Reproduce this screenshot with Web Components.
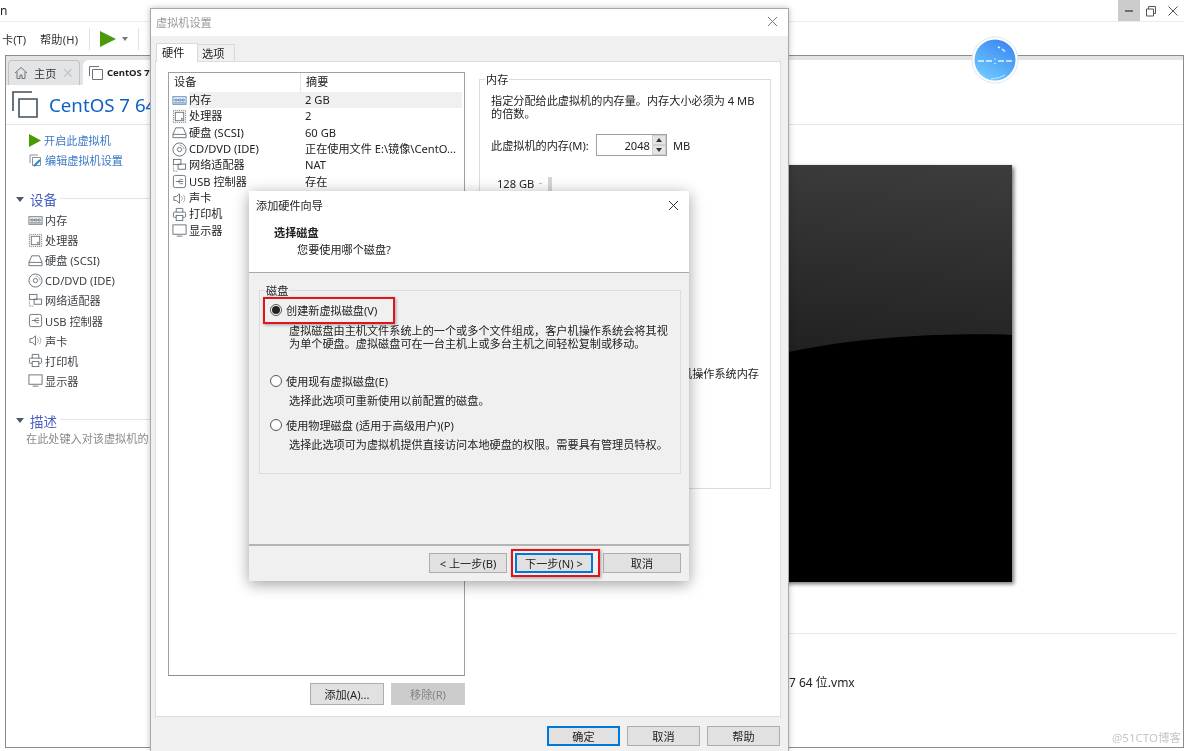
<!DOCTYPE html>
<html lang="zh">
<head>
<meta charset="utf-8">
<title>虚拟机设置</title>
<style>
  html, body { margin: 0; height: 100%; overflow: hidden; }
  body {
    position: relative;
    width: 1184px;
    height: 751px;
    background: #f0f0f0;
    color: #222;
    font: 11.15px "Noto Sans", "Noto Sans CJK SC", sans-serif;
    filter: blur(.3px);
  }
</style>
</head>
<body>
<main-window></main-window>
<settings-dialog></settings-dialog>
<wizard-dialog></wizard-dialog>

<script>
const ICONS = {
  ram: `<rect x="1" y="4" width="14" height="8"/><path d="M3 6.500h2.500v2H3zM6.800 6.500h2.500v2H6.800zM10.500 6.500H13v2h-2.500zM2 10.500h12"/>`,
  cpu: `<rect x="1.500" y="1.500" width="13" height="13" stroke-dasharray="1 1"/><rect x="3.500" y="3.500" width="9" height="9"/><path d="M10 10h1v1h-1z"/>`,
  hdd: `<path d="M4 3h8l3 7v3.500H1V10zM1 10h14"/>`,
  cd: `<circle cx="8" cy="8" r="7"/><circle cx="8" cy="8" r="2.300"/><path d="M8 3.200a4.800 4.800 0 0 1 4.800 4.800" opacity=".6"/>`,
  net: `<rect x="1.500" y="1.500" width="8" height="5.500"/><rect x="6.500" y="6.500" width="8" height="5.500"/><path d="M1.500 9v5h5" stroke-dasharray="1 1"/>`,
  usb: `<rect x="1.500" y="1.500" width="13" height="13" rx="2"/><path d="M4 8h8M6.500 8L9 5.700h2.500M6.500 8L9 10.300h2.500"/>`,
  sound: `<path d="M2 6h2.500L8 3v10l-3.500-3H2z"/><path d="M10 5.500a3.500 3.500 0 0 1 0 5M12 4a6 6 0 0 1 0 8" opacity=".6"/>`,
  printer: `<path d="M4.500 5.500v-4h7v4"/><rect x="1.500" y="5.500" width="13" height="5.500" rx="1"/><rect x="4.500" y="9" width="7" height="5.500" fill="#fff"/>`,
  display: `<rect x="1" y="2" width="14" height="10"/><path d="M5 14h6"/>`
};

class VmIcon extends HTMLElement {
  connectedCallback() {
    const name = this.getAttribute("name");
    this.attachShadow({ mode: "open" }).innerHTML = `
      <style>
        :host { display: inline-flex; width: 16px; height: 16px; flex: none; color: #69727a; }
        svg { width: 100%; height: 100%; fill: none; stroke: currentColor; stroke-width: 1; }
      </style>
      <svg viewBox="0 0 16 16">${ICONS[name] || ""}</svg>`;
  }
}
customElements.define("vm-icon", VmIcon);

class UiButton extends HTMLElement {
  connectedCallback() {
    this.attachShadow({ mode: "open" }).innerHTML = `
      <style>
        :host {
          display: flex;
          align-items: center;
          justify-content: center;
          box-sizing: border-box;
          width: 74px;
          height: 20px;
          background: #e1e1e1;
          border: 1px solid #adadad;
          color: #222;
        }
        :host([primary]) { border: 2px solid #0078d7; }
        :host([off]) { background: #cccccc; border-color: #cccccc; color: #838383; }
      </style>
      <slot></slot>`;
  }
}
customElements.define("ui-button", UiButton);

class GroupBox extends HTMLElement {
  connectedCallback() {
    const label = this.getAttribute("label");
    this.attachShadow({ mode: "open" }).innerHTML = `
      <style>
        :host {
          display: block;
          position: relative;
          box-sizing: border-box;
          border: 1px solid var(--line, #dcdcdc);
        }
        .legend {
          position: absolute;
          left: 5px;
          top: -8px;
          padding: 0 1px;
          line-height: 15px;
          background: var(--fill, #fff);
        }
      </style>
      <div class="legend">${label}</div>
      <slot></slot>`;
  }
}
customElements.define("group-box", GroupBox);

class SectionHead extends HTMLElement {
  connectedCallback() {
    this.attachShadow({ mode: "open" }).innerHTML = `
      <style>
        :host {
          display: flex;
          align-items: center;
          height: 20px;
          padding-left: 10px;
          color: #4a5fc0;
          font-size: 13.5px;
        }
        .arrow {
          width: 0; height: 0;
          margin-right: 6px;
          border: 4px solid transparent;
          border-top: 5px solid #4c5a68;
          border-bottom: 0;
        }
        .rule { flex: 1; height: 1px; margin: 0 0 2px 3px; background: #e4e4e4; }
      </style>
      <span class="arrow"></span><slot></slot><span class="rule"></span>`;
  }
}
customElements.define("section-head", SectionHead);

class SideItem extends HTMLElement {
  connectedCallback() {
    this.attachShadow({ mode: "open" }).innerHTML = `
      <style>
        :host {
          display: flex;
          align-items: center;
          gap: 2px;
          height: 20.12px;
          padding-left: 22px;
          color: #3a3f45;
        }
        vm-icon { width: 15px; height: 15px; }
      </style>
      <vm-icon name="${this.getAttribute("icon")}"></vm-icon><slot></slot>`;
  }
}
customElements.define("side-item", SideItem);

class MainWindow extends HTMLElement {
  connectedCallback() {
    const items = [
      ["ram", "内存"], ["cpu", "处理器"], ["hdd", "硬盘 (SCSI)"], ["cd", "CD/DVD (IDE)"],
      ["net", "网络适配器"], ["usb", "USB 控制器"], ["sound", "声卡"], ["printer", "打印机"], ["display", "显示器"]
    ].map(([icon, text]) => `<side-item icon="${icon}">${text}</side-item>`).join("");

    this.attachShadow({ mode: "open" }).innerHTML = `
      <style>
        :host {
          position: absolute;
          inset: 0;
          display: flex;
          flex-direction: column;
          background: #fff;
        }
        .titlebar {
          display: flex;
          justify-content: space-between;
          height: 21px;
          border-bottom: 1px solid #ececec;
          line-height: 21px;
          font-size: 12px;
        }
        .winbtns { display: flex; }
        .winbtns span { display: flex; align-items: center; justify-content: center; width: 22px; height: 21px; }
        .winbtns span:first-child { background: #ccc; }
        .winbtns svg { width: 12px; height: 12px; fill: none; stroke: #555; }
        .toolbar {
          display: flex;
          align-items: center;
          height: 33px;
          padding-left: 2px;
          color: #333;
        }
        .toolbar .help { margin-left: 14px; margin-right: 1px; letter-spacing: .2px; }
        .toolbar i { width: 1px; height: 22px; margin: 0 10px; background: #e2e2e2; }
        .caret { width: 0; height: 0; margin-left: 6px; border: 3.5px solid transparent; border-top: 4px solid #777; border-bottom: 0; }
        .frame {
          flex: 1;
          display: flex;
          flex-direction: column;
          min-height: 0;
          margin: 0 0 3px 5px;
          border: 1px solid #8c8c8c;
        }
        .tabs {
          display: flex;
          align-items: flex-end;
          gap: 3px;
          height: 29px;
          padding-left: 2px;
          background: #e3e4e6;
        }
        .tab {
          display: flex;
          align-items: center;
          box-sizing: border-box;
          height: 25px;
          border-radius: 4px 4px 0 0;
        }
        .home { width: 72px; padding: 0 5px; border: 1px solid #c2c2c2; border-bottom: 0; color: #333; }
        .home b { margin-left: 6px; font-weight: 400; }
        .home span { margin-left: auto; color: #c4c4c4; font-size: 14px; line-height: 1; }
        .active { flex: 1; padding-left: 6px; background: #fff; border-radius: 6px 0 0 0; font-weight: 700; font-size: 9.5px; color: #222; }
        .active svg { margin-right: 4px; }
        .head {
          display: flex;
          align-items: center;
          height: 39px;
          padding-left: 6px;
          border-bottom: 1px solid #e5e5e5;
          color: #0f62c4;
          font-size: 18.7px;
        }
        .head svg { margin-right: 11px; }
        .content { flex: 1; display: flex; min-height: 0; }
        .side { width: 494px; flex: none; padding-top: 5px; }
        .action { display: flex; align-items: center; height: 20px; padding-left: 23px; gap: 3px; color: #3b78c8; }
        .devices { margin-top: 19px; }
        .items { padding-top: 1px; }
        .describe { margin-top: 20px; }
        .describe p { margin: -1px 0 0 20px; line-height: 18px; color: #8a8a8a; white-space: nowrap; }
        .right { flex: 1; display: flex; flex-direction: column; padding-top: 40px; }
        .shot {
          width: 512px;
          height: 417px;
          flex: none;
          box-shadow: 2px 2px 4px rgba(0,0,0,.55);
          line-height: 0;
        }
        .rule { height: 1px; margin: 51px 6px 0 0; background: #e8e8e8; }
        .file { margin: 41px 0 0 289px; font-size: 12px; line-height: 16px; color: #222; }
        .badge { position: absolute; left: 971px; top: 36px; width: 48px; height: 48px; }
        .mark { position: absolute; left: 1112px; top: 730px; color: #c6c6c6; font-size: 11.5px; line-height: 16px; }
      </style>
      <div class="titlebar">
        <span>n</span>
        <div class="winbtns">
          <span><svg viewBox="0 0 12 12"><path d="M2 6h8" stroke-width="1.600"/></svg></span>
          <span><svg viewBox="0 0 12 12"><path d="M1.500 4h7v7h-7zM3.500 4V1.500h7v7H8.500"/></svg></span>
          <span><svg viewBox="0 0 12 12"><path d="M1.500 1.500l9 9M10.500 1.500l-9 9"/></svg></span>
        </div>
      </div>
      <div class="toolbar">
        <span>卡(T)</span><span class="help">帮助(H)</span>
        <i></i>
        <svg width="16" height="16" viewBox="0 0 16 16"><path d="M0 0l16 8-16 8z" fill="#4a9a0a"/></svg>
        <span class="caret"></span>
        <i></i>
      </div>
      <div class="frame">
        <div class="tabs">
          <div class="tab home">
            <svg width="14" height="14" viewBox="0 0 14 14" fill="none" stroke="#6b7278"><path d="M1 7l6-5.500L13 7M3 6v6.500h3V9h2v3.500h3V6"/></svg>
            <b>主页</b><span>✕</span>
          </div>
          <div class="tab active">
            <svg width="14" height="14" viewBox="0 0 14 14" fill="none" stroke="#6b7278"><path d="M3.500 3.500h10v10h-10zM.5 10V.5H10"/></svg>
            CentOS 7
          </div>
        </div>
        <div class="head">
          <svg width="26" height="27" viewBox="0 0 26 27" fill="none" stroke="#3f5060" stroke-width="1.600"><path d="M7 8h18v18H7zM1 20V1h19"/></svg>
          CentOS 7 64
        </div>
        <div class="content">
          <div class="side">
            <div class="action">
              <svg width="12" height="13" viewBox="0 0 12 13"><path d="M0 0l12 6.500L0 13z" fill="#4a9a0a"/></svg>开启此虚拟机
            </div>
            <div class="action">
              <svg width="13" height="13" viewBox="0 0 13 13" fill="none"><path d="M3.500 3.500h8v8h-8zM1 9V1h8" stroke="#8a9096"/><path d="M5 12l6-6" stroke="#1d88d8" stroke-width="2"/></svg>编辑虚拟机设置
            </div>
            <section-head class="devices">设备</section-head>
            <div class="items">${items}</div>
            <section-head class="describe">描述</section-head>
            <div class="describe" style="margin-top:0"><p>在此处键入对该虚拟机的</p></div>
          </div>
          <div class="right">
            <div class="shot">
              <svg width="512" height="417" viewBox="0 0 512 417">
                <defs><linearGradient id="g" x1="0.9" y1="0" x2="0.7" y2="1"><stop offset="0" stop-color="#3c3c3c"/><stop offset="1" stop-color="#1c1c1c"/></linearGradient></defs>
                <rect width="512" height="417" fill="#000"/>
                <path d="M0 0h512v170C460 168 370 170 289 187L0 230z" fill="url(#g)"/>
              </svg>
            </div>
            <div class="rule"></div>
            <div class="file">7 64 位.vmx</div>
          </div>
        </div>
      </div>
      <svg class="badge" viewBox="0 0 48 48">
        <defs><linearGradient id="b" x1="0.8" y1="0" x2="0.2" y2="1"><stop offset="0" stop-color="#3a86f2"/><stop offset="1" stop-color="#70ccff"/></linearGradient></defs>
        <circle cx="24" cy="24" r="23" fill="#fff" stroke="#dfe6ee"/>
        <circle cx="24" cy="24" r="20.500" fill="url(#b)"/>
        <path d="M7 25h6M15 25h6M27 25h6M35 25h6M24 22.500v1M24 27v1M27 11l2 .8M31 13l3 2.500" stroke="#e8f4ff" stroke-width="1.500" fill="none"/>
        <path d="M20 43q8-.5 14-4q-6 4-14 4z" stroke="#a8e0ff" fill="none"/>
      </svg>
      <div class="mark">@51CTO博客</div>`;
  }
}
customElements.define("main-window", MainWindow);

class HwRow extends HTMLElement {
  connectedCallback() {
    this.attachShadow({ mode: "open" }).innerHTML = `
      <style>
        :host {
          display: flex;
          align-items: center;
          height: 16.33px;
          padding-left: 3px;
          white-space: nowrap;
        }
        .name { display: flex; align-items: center; width: 128px; flex: none; height: 100%; }
        .name span { margin-left: 2px; }
        .name span, .val { line-height: 16px; }
        :host([selected]) .val, :host([selected]) span { background: #f0f0f0; }
        :host([selected]) .name span { flex: 1; }
        :host([selected]) .val { flex: 1; height: 100%; }
        .val { padding-left: 5px; margin-right: 2px; }
        vm-icon { width: 15px; height: 15px; }
        :host([selected]) vm-icon { color: #4f82b8; }
      </style>
      <div class="name"><vm-icon name="${this.getAttribute("icon")}"></vm-icon><span>${this.getAttribute("name")}</span></div>
      <div class="val">${this.getAttribute("value")}</div>`;
  }
}
customElements.define("hw-row", HwRow);

class SettingsDialog extends HTMLElement {
  connectedCallback() {
    const rows = [
      ["ram", "内存", "2 GB"], ["cpu", "处理器", "2"], ["hdd", "硬盘 (SCSI)", "60 GB"],
      ["cd", "CD/DVD (IDE)", "正在使用文件 E:\\镜像\\CentO..."], ["net", "网络适配器", "NAT"],
      ["usb", "USB 控制器", "存在"], ["sound", "声卡", ""], ["printer", "打印机", ""], ["display", "显示器", ""]
    ].map(([icon, name, value], i) =>
      `<hw-row icon="${icon}" name="${name}" value="${value}"${i === 0 ? " selected" : ""}></hw-row>`).join("");

    this.attachShadow({ mode: "open" }).innerHTML = `
      <style>
        :host {
          position: absolute;
          left: 150px;
          top: 8px;
          width: 639px;
          height: 743px;
          box-sizing: border-box;
          display: flex;
          flex-direction: column;
          background: #f0f0f0;
          border: 1px solid #a8a8a8;
          border-bottom: 0;
          box-shadow: 0 0 6px rgba(0,0,0,.25);
        }
        .title {
          display: flex;
          align-items: center;
          justify-content: space-between;
          box-sizing: border-box;
          flex: none;
          height: 27px;
          padding: 0 10px 2px 5px;
          background: #fff;
          color: #9a9a9a;
        }
        .title svg { width: 11px; height: 11px; stroke: #777; fill: none; }
        .tabs { display: flex; align-items: flex-end; flex: none; height: 25px; padding-left: 5px; position: relative; z-index: 1; }
        .tabs div { box-sizing: border-box; display: flex; align-items: center; border: 1px solid #d9d9d9; border-bottom: 0; }
        .on { width: 42px; height: 19px; margin-bottom: -1px; padding: 0 0 2px 5px; background: #fff; }
        .off { width: 38px; height: 17px; margin-left: -1px; padding-left: 4px; }
        .panel {
          box-sizing: border-box;
          flex: none;
          display: flex;
          gap: 14px;
          width: 626px;
          height: 656px;
          margin-left: 4px;
          padding: 10px 9px 0 12px;
          background: #fff;
          border: 1px solid #dcdcdc;
        }
        .left { width: 297px; flex: none; }
        .list { box-sizing: border-box; height: 604px; border: 1px solid #a0a0a0; border-bottom-color: #8e8e8e; }
        .cols { display: flex; height: 19px; line-height: 18px; }
        .cols span:first-child { width: 126px; padding-left: 5px; border-right: 1px solid #e5e5e5; }
        .cols span:last-child { padding-left: 5px; }
        .actions { display: flex; justify-content: flex-end; gap: 7px; margin-top: 7px; }
        .actions ui-button { height: 22px; }
        group-box { flex: 1; align-self: flex-start; margin-top: 7px; height: 410px; padding: 14px 11px 0; }
        .intro { line-height: 13px; }
        .spin { display: flex; align-items: center; height: 22px; margin-top: 14px; }
        .spin label { width: 105px; }
        .field {
          box-sizing: border-box;
          display: flex;
          justify-content: flex-end;
          align-items: center;
          width: 71px;
          height: 22px;
          margin-right: 6px;
          border: 1px solid #a0a0a0;
        }
        .field span { margin-right: 2px; }
        .arrows { display: flex; flex-direction: column; width: 14px; height: 20px; background: #e4e4e4; }
        .arrows i { flex: 1; display: flex; align-items: center; justify-content: center; border: 1px solid #cfcfcf; }
        .arrows i::after { content: ""; border: 3px solid transparent; }
        .arrows i:first-child::after { border-bottom: 4px solid #333; border-top: 0; }
        .arrows i:last-child::after { border-top: 4px solid #333; border-bottom: 0; }
        .slider { display: flex; height: 190px; margin-top: 21px; padding-left: 6px; line-height: 14px; }
        .slider em { width: 4px; height: 100%; margin-left: 6px; background: #d6d6d6; }
        .slider u { margin: 6px 0 0 5px; width: 3px; height: 1px; background: #bbb; }
        .guest { margin: 0; text-align: right; line-height: 14px; }
        .foot { display: flex; justify-content: flex-end; gap: 7px; margin-top: 9px; padding-right: 8px; }
        .foot ui-button { width: 73px; }
      </style>
      <div class="title">虚拟机设置<svg viewBox="0 0 11 11"><path d="M1 1l9 9M10 1l-9 9"/></svg></div>
      <div class="tabs"><div class="on">硬件</div><div class="off">选项</div></div>
      <div class="panel">
        <div class="left">
          <div class="list">
            <div class="cols"><span>设备</span><span>摘要</span></div>
            ${rows}
          </div>
          <div class="actions"><ui-button>添加(A)...</ui-button><ui-button off>移除(R)</ui-button></div>
        </div>
        <group-box label="内存">
          <div class="intro">指定分配给此虚拟机的内存量。内存大小必须为 4 MB<br>的倍数。</div>
          <div class="spin">
            <label>此虚拟机的内存(M):</label>
            <div class="field"><span>2048</span><div class="arrows"><i></i><i></i></div></div>
            <span>MB</span>
          </div>
          <div class="slider"><span>128 GB</span><u></u><em></em></div>
          <p class="guest">机操作系统内存</p>
        </group-box>
      </div>
      <div class="foot">
        <ui-button primary>确定</ui-button><ui-button>取消</ui-button><ui-button>帮助</ui-button>
      </div>`;
  }
}
customElements.define("settings-dialog", SettingsDialog);

class RadioOption extends HTMLElement {
  connectedCallback() {
    this.attachShadow({ mode: "open" }).innerHTML = `
      <style>
        :host { display: block; }
        .top { display: flex; align-items: center; gap: 4px; height: 16px; }
        .dot {
          box-sizing: border-box;
          display: flex;
          align-items: center;
          justify-content: center;
          width: 12px;
          height: 12px;
          border: 1px solid #555;
          border-radius: 50%;
          background: #fff;
        }
        :host([checked]) .dot::after { content: ""; width: 8px; height: 8px; border-radius: 50%; background: #222; }
        .text { margin: var(--gap, 5px) 0 0 19px; line-height: 13px; white-space: nowrap; }
      </style>
      <div class="top"><span class="dot"></span>${this.getAttribute("label")}</div>
      <div class="text"><slot></slot></div>`;
  }
}
customElements.define("radio-option", RadioOption);

class WizardDialog extends HTMLElement {
  connectedCallback() {
    this.attachShadow({ mode: "open" }).innerHTML = `
      <style>
        :host {
          position: absolute;
          left: 249px;
          top: 191px;
          width: 440px;
          height: 390px;
          display: flex;
          flex-direction: column;
          background: #f0f0f0;
          box-shadow: 0 3px 14px rgba(0,0,0,.38);
        }
        .top { flex: none; height: 82px; box-sizing: border-box; background: #fff; border-bottom: 1px solid #a8a8a8; }
        .title { display: flex; align-items: center; justify-content: space-between; height: 28px; padding: 0 10px 0 7px; }
        .title svg { width: 11px; height: 11px; stroke: #333; fill: none; }
        h2 { margin: 7px 0 0 25px; font-size: 11.15px; line-height: 14px; font-weight: 700; }
        .sub { margin: 3px 0 0 48px; line-height: 14px; }
        group-box { --fill: #f0f0f0; flex: none; width: 422px; height: 184px; margin: 17px 0 0 10px; padding: 11px 0 0 10px; }
        .first { --gap: 6px; margin-bottom: 23px; }
        .second { margin-bottom: 10px; }
        .foot {
          flex: 1;
          display: flex;
          justify-content: flex-end;
          margin-top: 70px;
          padding: 7px 8px 0 0;
          border-top: 2px solid #b4b4b4;
        }
        .foot ui-button { width: 78px; }
        .foot ui-button[primary] { margin: 0 10px 0 8px; }
        .hl { position: absolute; box-sizing: border-box; border: 2px solid #e0141a; box-shadow: 1px 1px 3px rgba(0,0,0,.35); pointer-events: none; }
        .hl.a { left: 14px; top: 106px; width: 132px; height: 27px; }
        .hl.b { left: 262px; top: 358px; width: 89px; height: 28px; }
      </style>
      <div class="top">
        <div class="title">添加硬件向导<svg viewBox="0 0 11 11"><path d="M1 1l9 9M10 1l-9 9"/></svg></div>
        <h2>选择磁盘</h2>
        <div class="sub">您要使用哪个磁盘?</div>
      </div>
      <group-box label="磁盘">
        <radio-option class="first" checked label="创建新虚拟磁盘(V)">虚拟磁盘由主机文件系统上的一个或多个文件组成&#xFF0C;客户机操作系统会将其视<br>为单个硬盘。虚拟磁盘可在一台主机上或多台主机之间轻松复制或移动。</radio-option>
        <radio-option class="second" label="使用现有虚拟磁盘(E)">选择此选项可重新使用以前配置的磁盘。</radio-option>
        <radio-option label="使用物理磁盘 (适用于高级用户)(P)">选择此选项可为虚拟机提供直接访问本地硬盘的权限。需要具有管理员特权。</radio-option>
      </group-box>
      <div class="foot">
        <ui-button>&lt; 上一步(B)</ui-button>
        <ui-button primary>下一步(N) &gt;</ui-button>
        <ui-button>取消</ui-button>
      </div>
      <div class="hl a"></div>
      <div class="hl b"></div>`;
  }
}
customElements.define("wizard-dialog", WizardDialog);
</script>
</body>
</html>
